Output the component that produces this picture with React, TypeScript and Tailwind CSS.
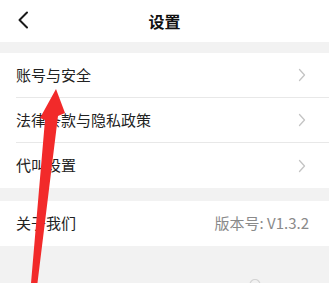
import React from "react";

const Chevron = () => (
  <svg width="8" height="14" viewBox="0 0 8 14" fill="none" className="shrink-0">
    <path d="M1.5 1.5 L6.5 7 L1.5 12.5" stroke="#c4c4c4" strokeWidth="1.3" strokeLinecap="round" strokeLinejoin="round" />
  </svg>
);

const Row = ({ label, divider }: { label: string; divider?: boolean }) => (
  <div className="bg-white pl-4">
    <div className={`flex items-center justify-between h-[45px] pr-[23px] ${divider ? "border-b border-[#e8e8e8]" : ""}`}>
      <span className="text-[15px] text-[#222]">{label}</span>
      <Chevron />
    </div>
  </div>
);

export default function App() {
  return (
    <div
      className="relative w-[329px] h-[283px] overflow-hidden bg-[#f2f2f2]"
      style={{ fontFamily: '"Noto Sans CJK SC", "Noto Sans", sans-serif' }}
    >
      <div className="relative h-[42px] bg-white flex items-center justify-center">
        <svg width="12" height="18" viewBox="0 0 12 18" fill="none" className="absolute left-[17px] top-[11px]">
          <path d="M10 1.5 L2.5 9 L10 16.5" stroke="#1a1a1a" strokeWidth="2" strokeLinecap="round" strokeLinejoin="round" />
        </svg>
        <span className="text-[16px] font-bold text-[#111]">设置</span>
      </div>
      <div className="h-[11px]" />
      <Row label="账号与安全" divider />
      <Row label="法律条款与隐私政策" divider />
      <Row label="代叫设置" />
      <div className="h-[13px]" />
      <div className="bg-white h-[45px] flex items-center justify-between pl-4 pr-[20px]">
        <span className="text-[15px] text-[#222]">关于我们</span>
        <span className="text-[15px] text-[#8a8a8a]">版本号: V1.3.2</span>
      </div>
      <div className="flex pt-[33px] pl-[249px]">
        <svg width="12" height="6" viewBox="0 0 12 6" fill="none">
          <path d="M1 5.5 A5 5 0 0 1 11 5.5" stroke="#d4d4d4" strokeWidth="1.2" />
        </svg>
      </div>
      <svg className="absolute inset-0 pointer-events-none" width="329" height="283" viewBox="0 0 329 283">
        <polygon points="56,89 65,113 58,116 36,295 30,295 45,120 40,118" fill="#f22a2a" />
      </svg>
    </div>
  );
}
